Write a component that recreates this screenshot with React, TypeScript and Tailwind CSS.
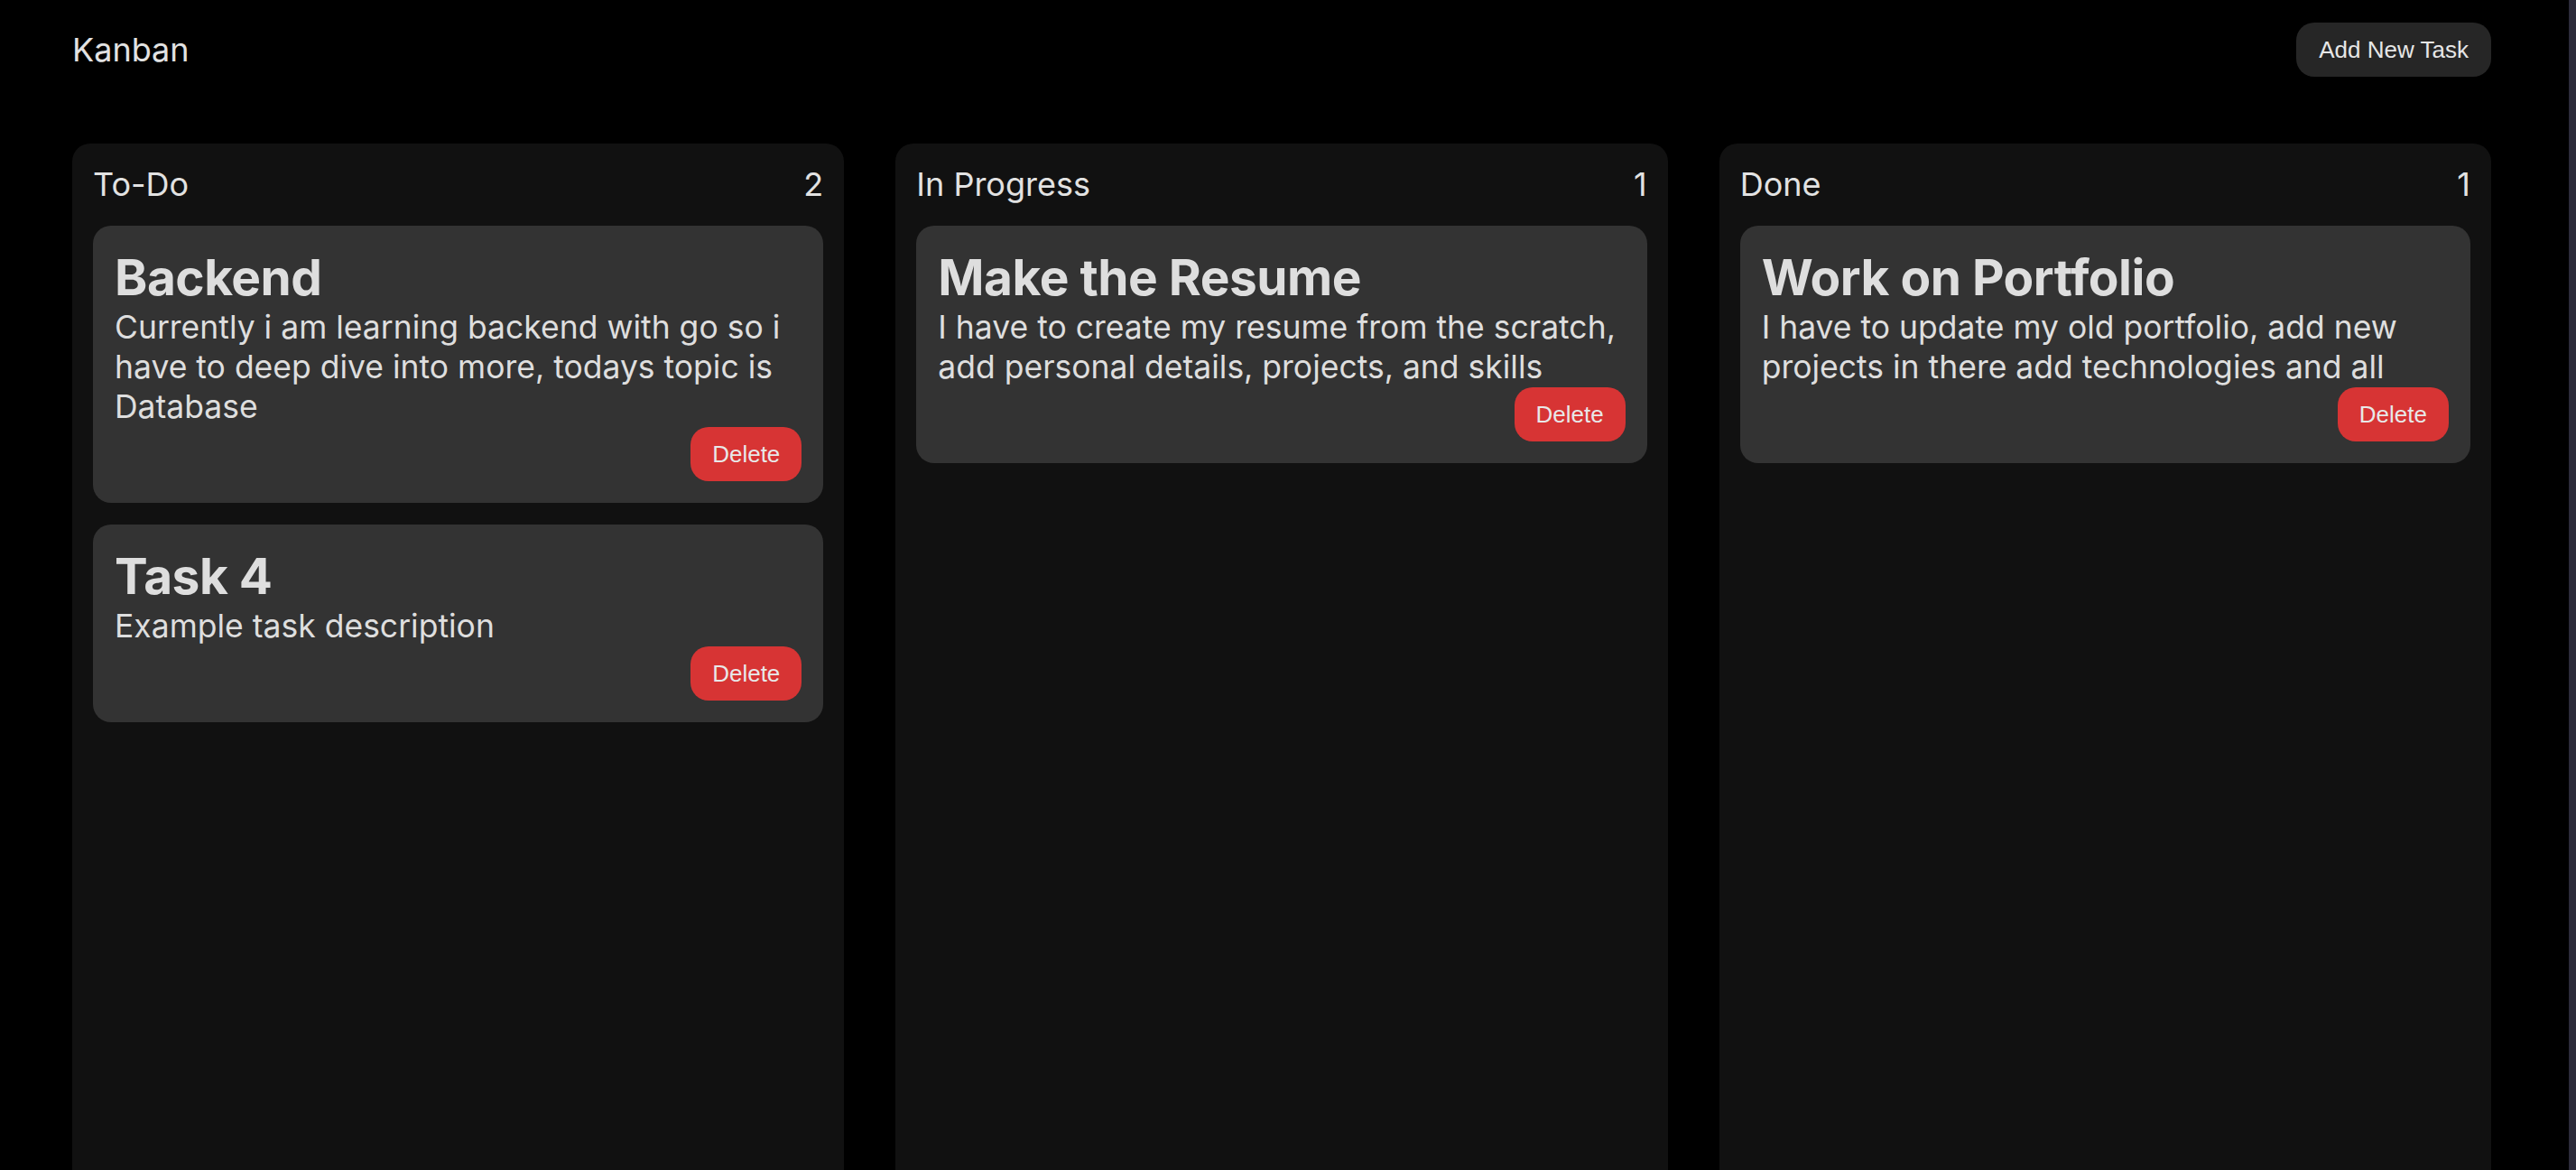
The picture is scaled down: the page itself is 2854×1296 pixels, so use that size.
import React, { useState } from 'react';

interface Task {
  id: number;
  title: string;
  description: string;
  status: 'todo' | 'progress' | 'done';
}

const initialTasks: Task[] = [
  {
    id: 1,
    title: 'Backend',
    description: 'Currently i am learning backend with go so i have to deep dive into more, todays topic is Database',
    status: 'todo',
  },
  { id: 4, title: 'Task 4', description: 'Example task description', status: 'todo' },
  {
    id: 2,
    title: 'Make the Resume',
    description: 'I have to create my resume from the scratch, add personal details, projects, and skills',
    status: 'progress',
  },
  {
    id: 3,
    title: 'Work on Portfolio',
    description: 'I have to update my old portfolio, add new projects in there add technologies and all',
    status: 'done',
  },
];

const columns = [
  { id: 'todo', label: 'To-Do' },
  { id: 'progress', label: 'In Progress' },
  { id: 'done', label: 'Done' },
] as const;

const TaskCard: React.FC<{ task: Task; onDelete: (id: number) => void }> = ({ task, onDelete }) => (
  <div className="flex flex-col rounded-[20px] bg-[#333333] p-[24px]">
    <h2 className="text-[55px] font-bold leading-[67px] tracking-[-0.5px] text-[#dedede]">{task.title}</h2>
    <p className="text-[35.5px] leading-[44px] text-[#dedede]">{task.description}</p>
    <button
      onClick={() => onDelete(task.id)}
      className="h-[60px] self-end rounded-[20px] bg-[#d73434] px-[24px] font-['Liberation_Sans',Arial,sans-serif] text-[26px] text-[#e8e8e8]"
    >
      Delete
    </button>
  </div>
);

export default function App() {
  const [tasks, setTasks] = useState<Task[]>(initialTasks);

  const handleDelete = (id: number) => {
    setTasks((prev) => prev.filter((t) => t.id !== id));
  };

  return (
    <div className="flex min-h-screen bg-black font-['Inter','Noto_Sans',sans-serif]">
      <main className="flex flex-1 flex-col overflow-hidden pl-[80px] pr-[86px] pt-[25px]">
        <header className="flex h-[60px] items-center justify-between">
          <h1 className="text-[36px] leading-none text-[#e2e2e2]">Kanban</h1>
          <button className="h-[60px] rounded-[20px] bg-[#262626] px-[25px] font-['Liberation_Sans',Arial,sans-serif] text-[26px] text-[#e6e6e6]">
            Add New Task
          </button>
        </header>

        <div className="mt-[74px] grid grid-cols-3 gap-[57px]">
          {columns.map((col) => {
            const colTasks = tasks.filter((t) => t.status === col.id);
            return (
              <section key={col.id} className="flex min-h-[1200px] flex-col gap-[24px] rounded-[20px] bg-[#111111] p-[23px]">
                <div className="flex items-center justify-between text-[36px] leading-[44px] text-[#e2e2e2]">
                  <span>{col.label}</span>
                  <span>{colTasks.length}</span>
                </div>
                {colTasks.map((task) => (
                  <TaskCard key={task.id} task={task} onDelete={handleDelete} />
                ))}
              </section>
            );
          })}
        </div>
      </main>
      <div className="w-[8px] shrink-0 bg-[#2c2b3a]" />
    </div>
  );
}
